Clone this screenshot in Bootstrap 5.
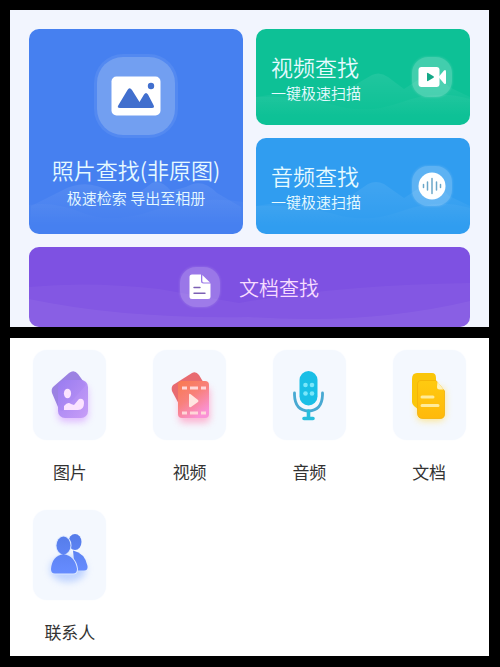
<!DOCTYPE html>
<html lang="zh-CN">
<head>
<meta charset="utf-8">
<meta name="viewport" content="width=device-width, initial-scale=1">
<title>文件查找</title>
<link rel="stylesheet" href="https://cdn.jsdelivr.net/npm/bootstrap@5.3.0/dist/css/bootstrap.min.css">
<style>
body { background: #000; font-family: "Noto Sans CJK SC", "Noto Sans", sans-serif; }
.page { padding: 10px 11px 10px 10px; gap: 11px; }
.finder { background: #f2f5fe; padding: 19px 19px 0; }
.finder-grid { display: grid; grid-template-columns: 1fr 1fr; gap: 13px; }
.stack { gap: 13px; }
.tile { border-radius: 10px; color: #e6faff; font-weight: 350; overflow: hidden; position: relative; }
.tile:hover { color: #fff; }
.tile-photo { background: #4680f0; padding-top: 28px; }
.tile-video { background: #0dc196; height: 96px; padding: 0 18px 0 15px; }
.tile-audio { background: #309df0; height: 96px; padding: 0 18px 0 15px; }
.tile-doc { background: #7e51e2; height: 80px; gap: 19px; grid-column: 1 / -1; color: #f6dcff; }
.scenery { position: absolute; left: 0; bottom: 0; width: 100%; height: 100%; }
.tile > :not(.scenery) { position: relative; }
.title { font-size: 22px; line-height: 32px; }
.title-doc { font-size: 20px; line-height: 30px; padding-top: 2px; }
.note { font-size: 15px; line-height: 22px; }
.tile-photo .title { margin-top: 18px; }
.tile-photo .note { margin-top: 2px; }
.badge-lg { width: 78px; height: 78px; border-radius: 26px; background: #729ff1; box-shadow: 0 0 0 3px rgba(255,255,255,.07); }
.badge-sm { width: 40px; height: 40px; border-radius: 16px; background: rgba(255,255,255,.22); box-shadow: 0 0 2px 1px rgba(255,255,255,.1); }
.kinds { background: #fff; padding: 12px 0 6px; row-gap: 20px; }
.kind { color: #333; }
.kind-icon { width: 73px; height: 90px; border-radius: 14px; background: #f4f8fe; box-shadow: 0 0 2px #f8faff; }
.kind-name { font-size: 17px; line-height: 24px; margin-top: 20px; }
.kinds .col { height: 140px; }
</style>
<script src="https://cdn.jsdelivr.net/npm/bootstrap@5.3.0/dist/js/bootstrap.bundle.min.js"></script>
</head>
<body>
<main class="page d-flex flex-column">
  <section class="finder" aria-label="查找">
    <div class="finder-grid">
      <a href="#" class="tile tile-photo d-flex flex-column align-items-center text-decoration-none">
        <svg class="scenery" viewBox="0 0 214 205" preserveAspectRatio="none" aria-hidden="true">
          <defs><linearGradient id="haze" x1="0" y1="0" x2="0" y2="1"><stop offset="0" stop-color="#fff" stop-opacity=".08"/><stop offset=".8" stop-color="#fff" stop-opacity="0"/></linearGradient></defs>
          <path d="M2 177L32 162Q56 148 82 163L99 172L123 154Q132 150 142 162L157 158Q173 148 188 164L212 178V205H2Z" fill="url(#haze)"/>
          <path d="M0 176Q25 172 54 184T126 181T214 173V205H0Z" fill="url(#haze)" opacity=".4"/>
        </svg>
        <span class="badge-lg d-flex align-items-center justify-content-center">
          <svg width="50" height="40" viewBox="0 0 50 40" aria-hidden="true"><rect x=".5" y=".5" width="49" height="39" rx="5" fill="#fff"/><circle cx="40" cy="10" r="3.2" fill="#416fce"/><path d="M7.5 29L16.5 14Q18.5 10.500 21 14L28.500 26L33 18.500Q35 15.500 37 18.500L42.500 29Q44 32 41 32H9Q5.500 32 7.500 29Z" fill="#416fce"/></svg>
        </span>
        <span class="title">照片查找(非原图)</span>
        <span class="note">极速检索 导出至相册</span>
      </a>
      <div class="stack d-flex flex-column">
        <a href="#" class="tile tile-video d-flex align-items-center justify-content-between text-decoration-none">
          <svg class="scenery" viewBox="0 0 214 96" preserveAspectRatio="none" aria-hidden="true"><path d="M0 68Q30 62 58 67L90 61L116 46Q124 42 132 48L148 60L165 49Q178 40 193 58L214 68V96H0Z" fill="url(#haze)"/><path d="M0 68Q45 66 78 76T146 73T214 70V96H0Z" fill="url(#haze)" opacity=".5"/></svg>
          <span class="d-flex flex-column"><span class="title">视频查找</span><span class="note">一键极速扫描</span></span>
          <span class="badge-sm d-flex align-items-center justify-content-center">
            <svg width="28" height="22" viewBox="0 0 28 22" aria-hidden="true"><rect x=".5" y="1" width="21" height="20" rx="3" fill="#fff"/><path d="M20.500 11L26 4.500Q28 3 28 6V16.500Q28 19 26 17.500Z" fill="#fff"/><path d="M9 7.500Q9 6.500 10 7L15.500 10.200Q16.500 11 15.500 11.800L10 15Q9 15.500 9 14.500Z" fill="#14a887"/></svg>
          </span>
        </a>
        <a href="#" class="tile tile-audio d-flex align-items-center justify-content-between text-decoration-none">
          <svg class="scenery" viewBox="0 0 214 96" preserveAspectRatio="none" aria-hidden="true"><path d="M0 68Q30 62 58 67L90 61L112 46Q120 42 128 46L148 60L165 49Q178 40 193 58L214 68V96H0Z" fill="url(#haze)"/><path d="M0 68Q45 66 78 76T146 73T214 70V96H0Z" fill="url(#haze)" opacity=".5"/></svg>
          <span class="d-flex flex-column"><span class="title">音频查找</span><span class="note">一键极速扫描</span></span>
          <span class="badge-sm d-flex align-items-center justify-content-center">
            <svg width="28" height="28" viewBox="0 0 28 28" aria-hidden="true"><circle cx="14" cy="14" r="13.500" fill="#fff"/><path d="M5.500 12.500v3M9.500 10v8M14 6.500v15M18.500 10v8M22.500 12.500v3" stroke="#6ba7c9" stroke-width="1.500" stroke-linecap="round"/></svg>
          </span>
        </a>
      </div>
      <a href="#" class="tile tile-doc d-flex align-items-center justify-content-center text-decoration-none">
        <svg class="scenery" viewBox="0 0 441 80" preserveAspectRatio="none" aria-hidden="true"><path d="M0 40Q60 34 130 42L210 56Q310 38 441 36V80H0Z" fill="#fff" fill-opacity=".04"/><path d="M0 52Q95 72 220 70Q340 78 441 54V80H0Z" fill="#fff" fill-opacity=".05"/></svg>
        <span class="badge-sm d-flex align-items-center justify-content-center">
          <svg width="22" height="26" viewBox="0 0 22 26" aria-hidden="true"><path d="M3 .500H12V7Q12 9.500 14.500 9.500H21.500V22.500Q21.500 25 19 25H3Q.500 25 .500 22.500V3Q.500.500 3 .500Z" fill="#fff"/><path d="M13.300 1L21 8.500H15Q13.300 8.500 13.300 7Z" fill="#fff"/><path d="M5 13.500h6M5 19.300h11" stroke="#7c60b4" stroke-width="1.400" stroke-linecap="round"/></svg>
        </span>
        <span class="title-doc">文档查找</span>
      </a>
    </div>
  </section>

  <nav class="kinds row row-cols-4 g-0" aria-label="文件类型">
    <div class="col"><a href="#" class="kind d-flex flex-column align-items-center text-decoration-none">
      <span class="kind-icon d-flex align-items-center justify-content-center">
        <svg width="60" height="70" viewBox="0 0 60 70" aria-hidden="true">
          <defs><filter id="glow" x="-50%" y="-50%" width="200%" height="200%"><feGaussianBlur stdDeviation="3.500"/></filter><linearGradient id="violet" x1="0" y1="0" x2="1" y2="1"><stop stop-color="#9a7cf2"/><stop offset="1" stop-color="#c59af6"/></linearGradient></defs>
          <rect x="18" y="25" width="30" height="37" rx="7" fill="#d9a8ff" opacity=".75" filter="url(#glow)"/>
          <path d="M13 27L29 13Q34 9 38 14L46 25L23 51Q19 51 18 47L12 33Q11 29 13 27Z" fill="#9b82e2"/>
          <rect x="18" y="20" width="30" height="38" rx="7" fill="url(#violet)" opacity=".93"/>
          <ellipse cx="27.500" cy="33.500" rx="3.600" ry="4.800" fill="#fbe3ff"/><path d="M24 50V46Q28 41 31 44L34 45L39 39Q44 38 44 43Q44 50 38 50Z" fill="#fbe3ff"/>
        </svg>
      </span><span class="kind-name">图片</span></a></div>
    <div class="col"><a href="#" class="kind d-flex flex-column align-items-center text-decoration-none">
      <span class="kind-icon d-flex align-items-center justify-content-center">
        <svg width="60" height="70" viewBox="0 0 60 70" aria-hidden="true">
          <defs><linearGradient id="coral" x1="0" y1="0" x2=".6" y2="1"><stop stop-color="#f9794e"/><stop offset=".5" stop-color="#f8817c"/><stop offset="1" stop-color="#fa92d6"/></linearGradient></defs>
          <rect x="19" y="27" width="31" height="36" rx="5" fill="#ffa0c4" opacity=".75" filter="url(#glow)"/>
          <path d="M13 25L32 13Q36 11 39 15L45 25L21 48L12 31Q11 27 13 25Z" fill="#e86b70"/>
          <rect x="18" y="21" width="31" height="37" rx="4" fill="url(#coral)"/>
          <path d="M22 28h5M30 28h8M41 28h5M22 53h5M30 53h8M41 53h5" stroke="#ffd6d8" stroke-width="2.800"/>
          <path d="M29 35Q29 33 31 34.500L38 40Q39 41 38 42L31 47Q29 48 29 46Z" fill="#ffe5e0"/>
        </svg>
      </span><span class="kind-name">视频</span></a></div>
    <div class="col"><a href="#" class="kind d-flex flex-column align-items-center text-decoration-none">
      <span class="kind-icon d-flex align-items-center justify-content-center">
        <svg width="60" height="70" viewBox="0 0 60 70" aria-hidden="true">
          <rect x="20.500" y="11" width="18" height="34.500" rx="9" fill="#1abfe6"/>
          <path d="M15.500 33V35Q16 50.500 29.500 51Q43 50.500 43.500 35V33" fill="none" stroke="#48a9d2" stroke-width="2.800" stroke-linecap="round"/>
          <path d="M29.500 51V58M25 58.500H34" stroke="#28bedd" stroke-width="3.600" stroke-linecap="round"/>
          <g fill="#7ae7fa"><circle cx="26.500" cy="25" r="2.300"/><circle cx="33" cy="25" r="2.300"/><circle cx="26.500" cy="33.500" r="2.300"/><circle cx="33" cy="33.500" r="2.300"/></g>
        </svg>
      </span><span class="kind-name">音频</span></a></div>
    <div class="col"><a href="#" class="kind d-flex flex-column align-items-center text-decoration-none">
      <span class="kind-icon d-flex align-items-center justify-content-center">
        <svg width="60" height="70" viewBox="0 0 60 70" aria-hidden="true">
          <defs><linearGradient id="gold" x1="0" y1="0" x2="0" y2="1"><stop stop-color="#ffca10"/><stop offset="1" stop-color="#ffb90a"/></linearGradient></defs>
          <rect x="18" y="27" width="28" height="34" rx="6" fill="#ffdf70" opacity=".75" filter="url(#glow)"/>
          <path d="M18 13H33Q37 13 37 18V45L20 50L15 46Q13 44 13 42V19Q13 13 18 13Z" fill="#fac60a"/>
          <path d="M22 20.500H37L45.500 31V54Q45.500 58.500 41 58.500H24Q18.500 58.500 18.500 53V25Q18.500 20.500 22 20.500Z" fill="url(#gold)" stroke="#f2b008" stroke-width=".8"/>
          <path d="M38.500 21.500L44.500 29.500H40.500Q38 29.500 38 27Z" fill="#fff2bd"/>
          <path d="M23 37h11M23 45.500h16" stroke="#ffeb9a" stroke-width="3" stroke-linecap="round"/>
        </svg>
      </span><span class="kind-name">文档</span></a></div>
    <div class="col"><a href="#" class="kind d-flex flex-column align-items-center text-decoration-none">
      <span class="kind-icon d-flex align-items-center justify-content-center">
        <svg width="60" height="70" viewBox="0 0 60 70" aria-hidden="true">
          <defs><linearGradient id="azure" gradientUnits="userSpaceOnUse" x1="0" y1="14" x2="0" y2="53"><stop stop-color="#557ce9"/><stop offset="1" stop-color="#668cff"/></linearGradient></defs>
          <ellipse cx="28" cy="49" rx="18" ry="13" fill="#a9c4ff" opacity=".7" filter="url(#glow)"/>
          <ellipse cx="35" cy="22" rx="6.500" ry="8" fill="url(#azure)"/><path d="M33 30.500Q45 33 47.500 46Q48 50.500 44 50.500H35Z" fill="url(#azure)"/>
          <g fill="url(#azure)" stroke="#dce8ff" stroke-width="2"><ellipse cx="23.500" cy="25.500" rx="7" ry="9"/><path d="M11 49Q12 36 23.500 34.500Q35 36 37 49Q37 53.500 33 53.500H15Q11 53.500 11 49Z"/></g>
          <g fill="url(#azure)"><ellipse cx="23.500" cy="25.500" rx="7" ry="9"/><path d="M11 49Q12 36 23.500 34Q35 36 37 49Q37 53.500 33 53.500H15Q11 53.500 11 49Z"/></g>
        </svg>
      </span><span class="kind-name">联系人</span></a></div>
  </nav>
</main>
</body>
</html>
